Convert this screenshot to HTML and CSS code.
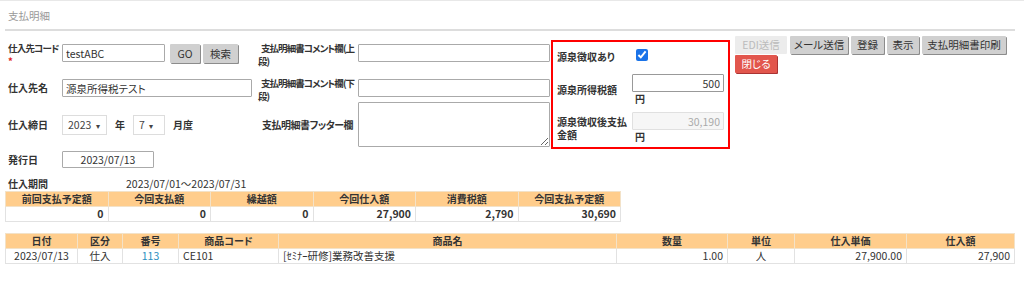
FILE: index.html
```html
<!DOCTYPE html>
<html lang="ja">
<head>
  <meta charset="UTF-8">
  <title>支払明細</title>
  <link rel="stylesheet" href="styles.css">
</head>
<body>
  <div class="page">
    <div class="title">支払明細</div>

    <div class="form">
      <div class="col-left">
        <div class="row row-code">
          <div class="label">仕入先コード<br><span class="req">*</span></div>
          <input class="input code" type="text" value="testABC">
          <button class="btn go">GO</button>
          <button class="btn search">検索</button>
        </div>
        <div class="row row-name">
          <div class="label">仕入先名</div>
          <input class="input name" type="text" value="源泉所得税テスト">
        </div>
        <div class="row row-close">
          <div class="label">仕入締日</div>
          <div class="select year">2023 <span class="caret">▾</span></div>
          <span class="unit">年</span>
          <div class="select month">7 <span class="caret">▾</span></div>
          <span class="unit">月度</span>
        </div>
        <div class="row row-issue">
          <div class="label">発行日</div>
          <input class="input issue" type="text" value="2023/07/13">
        </div>
      </div>

      <div class="col-mid">
        <div class="row row-c1">
          <div class="label mid-label">支払明細書コメント欄(上<br>段)</div>
          <input class="input comment" type="text">
        </div>
        <div class="row row-c2">
          <div class="label mid-label">支払明細書コメント欄(下<br>段)</div>
          <input class="input comment" type="text">
        </div>
        <div class="row row-footer">
          <div class="label mid-label">支払明細書フッター欄</div>
          <textarea class="footer-area"></textarea>
        </div>
      </div>

      <div class="tax-box">
        <div class="tax-row tax-check">
          <div class="label tax-label">源泉徴収あり</div>
          <div class="tax-value"><input class="check" type="checkbox" checked></div>
        </div>
        <div class="tax-row">
          <div class="label tax-label">源泉所得税額</div>
          <div class="tax-value">
            <input class="input money" type="text" value="500">
            <div class="yen">円</div>
          </div>
        </div>
        <div class="tax-row">
          <div class="label tax-label">源泉徴収後支払金額</div>
          <div class="tax-value">
            <input class="input money" type="text" value="30,190" disabled>
            <div class="yen">円</div>
          </div>
        </div>
      </div>

      <div class="actions">
        <button class="btn btn-edi disabled">EDI送信</button>
        <button class="btn btn-mail">メール送信</button>
        <button class="btn btn-save">登録</button>
        <button class="btn btn-show">表示</button>
        <button class="btn btn-print">支払明細書印刷</button>
        <button class="btn btn-close">閉じる</button>
      </div>
    </div>

    <div class="period">
      <div class="label period-label">仕入期間</div>
      <div>2023/07/01～2023/07/31</div>
    </div>

    <table class="summary">
      <tr>
        <th>前回支払予定額</th>
        <th>今回支払額</th>
        <th>繰越額</th>
        <th>今回仕入額</th>
        <th>消費税額</th>
        <th>今回支払予定額</th>
      </tr>
      <tr>
        <td>0</td>
        <td>0</td>
        <td>0</td>
        <td>27,900</td>
        <td>2,790</td>
        <td>30,690</td>
      </tr>
    </table>

    <table class="detail">
      <colgroup>
        <col class="w-date">
        <col class="w-kind">
        <col class="w-no">
        <col class="w-code">
        <col class="w-name">
        <col class="w-qty">
        <col class="w-unit">
        <col class="w-price">
        <col class="w-amount">
      </colgroup>
      <tr>
        <th>日付</th>
        <th>区分</th>
        <th>番号</th>
        <th>商品コード</th>
        <th>商品名</th>
        <th>数量</th>
        <th>単位</th>
        <th>仕入単価</th>
        <th>仕入額</th>
      </tr>
      <tr>
        <td class="center">2023/07/13</td>
        <td class="center">仕入</td>
        <td class="center"><a href="#" class="link">113</a></td>
        <td>CE101</td>
        <td>[ｾﾐﾅｰ研修]業務改善支援</td>
        <td class="num">1.00</td>
        <td class="center">人</td>
        <td class="num">27,900.00</td>
        <td class="num">27,900</td>
      </tr>
    </table>
  </div>
</body>
</html>
```

FILE: styles.css
```css
body {
  margin: 0;
  font-family: "Noto Sans CJK JP", "Noto Sans", sans-serif;
  font-size: 10.5px;
  font-feature-settings: "palt";
  color: #333;
  background: #fff;
}

.page {
  border-top: 1px solid #e8e8e8;
  padding: 0 9px 0 5px;
}

.title {
  height: 28px;
  line-height: 30px;
  padding-left: 3px;
  color: #999;
  border-bottom: 2px solid #ddd;
}

.label {
  font-weight: bold;
  font-size: 10px;
  color: #333;
  line-height: 13px;
}

.input {
  box-sizing: border-box;
  height: 18px;
  border: 1px solid #aaa;
  border-radius: 1px;
  padding: 0 3px;
  font-family: inherit;
  font-size: 10.5px;
  font-feature-settings: "palt";
  color: #333;
  background: #fff;
}

.form {
  display: flex;
  align-items: flex-start;
  padding-top: 5px;
}

/* left column */
.col-left {
  width: 244px;
  margin-left: 3px;
  padding-top: 8px;
}

.row {
  display: flex;
  align-items: flex-start;
}

.col-left .label {
  width: 54px;
  flex: none;
  white-space: nowrap;
}

.row-code {
  height: 35px;
}

.row-code .label {
  margin-top: -2px;
  font-size: 9.5px;
  letter-spacing: -0.8px;
}

.req {
  color: #e02020;
}

.code {
  width: 103px;
}

.btn {
  box-sizing: border-box;
  height: 18px;
  padding: 0;
  border: none;
  border-radius: 1px;
  background: #d0d0d0;
  box-shadow: 1px 1px 0 #8c8c8c;
  font-family: inherit;
  font-size: 10.5px;
  font-feature-settings: "palt";
  color: #333;
  line-height: 18px;
  white-space: nowrap;
}

.go {
  margin-left: 5px;
  width: 30px;
  height: 19px;
}

.search {
  margin-left: 3px;
  width: 35px;
  height: 19px;
}

.row-name {
  height: 36px;
}

.row-name .label,
.row-issue .label {
  line-height: 18px;
}

.name {
  width: 190px;
}

.row-close {
  height: 36px;
}

.row-close .label,
.unit {
  line-height: 20px;
  font-weight: bold;
}

.unit {
  font-size: 10px;
  margin: 0 8px;
}

.select {
  box-sizing: border-box;
  height: 20px;
  line-height: 18px;
  border: 1px solid #ddd;
  padding: 0 5px;
  color: #444;
}

.year {
  width: 45px;
}

.month {
  width: 32px;
}

.caret {
  font-size: 8px;
  margin-left: 2px;
}

.row-issue {
  height: 17px;
}

.issue {
  width: 92px;
  height: 17px;
  text-align: center;
}

/* middle column */
.col-mid {
  margin-left: 6px;
  padding-top: 8px;
}

.mid-label {
  width: 100px;
  flex: none;
  white-space: nowrap;
}

.row-c1 {
  height: 35px;
}

.row-c1 .label,
.row-c2 .label {
  margin-top: -2px;
  font-size: 9.5px;
  letter-spacing: -0.95px;
  text-indent: 3px;
}

.row-c2 {
  height: 23px;
}

.comment {
  width: 192px;
}

.row-footer {
  align-items: center;
}

.row-footer .label {
  padding-left: 4px;
  width: 96px;
  letter-spacing: -0.5px;
}

.footer-area {
  box-sizing: border-box;
  width: 192px;
  height: 45px;
  border: 1px solid #aaa;
  border-radius: 1px;
  margin: 0;
  resize: both;
}

/* withholding tax box */
.tax-box {
  box-sizing: border-box;
  width: 179px;
  height: 109px;
  margin: 4px 0 0 1px;
  border: 2px solid #f00;
  padding: 2px 4px 0 4px;
  display: flex;
  flex-direction: column;
  gap: 6px;
}

.tax-row {
  display: flex;
  align-items: center;
}

.tax-check {
  height: 24px;
}

.tax-label {
  width: 75px;
  flex: none;
}

.check {
  margin: 0 0 0 4px;
  width: 12px;
  height: 12px;
  accent-color: #1a73e8;
}

.money {
  width: 92px;
  text-align: right;
  border-color: #999;
}

.money:disabled {
  background: #f6f6f6;
  border-color: #e0e0e0;
  color: #aaa;
}

.yen {
  font-weight: bold;
  font-size: 10px;
  line-height: 13px;
  padding-left: 3px;
}

.tax-row + .tax-row + .tax-row {
  margin-top: 1px;
}

/* buttons */
.actions {
  width: 285px;
  margin-left: 5px;
  display: flex;
  flex-wrap: wrap;
  gap: 1px 3px;
}

.btn-edi { width: 52px; }
.btn-mail { width: 58px; }
.btn-save { width: 33px; }
.btn-show { width: 32px; }
.btn-print { width: 84px; }
.btn-close { width: 42px; }

.btn.disabled {
  background: #ececec;
  color: #bbb;
  box-shadow: none;
}

.btn.btn-close {
  background: #e2564d;
  color: #fff;
  box-shadow: 1px 1px 0 #a33;
}

/* period */
.period {
  display: flex;
  margin-top: 8px;
  line-height: 15px;
}

.period-label {
  width: 118px;
  padding-left: 3px;
  line-height: 15px;
}

/* tables */
table {
  border-collapse: collapse;
}

th,
td {
  border: 1px solid #e2e2e2;
  height: 14px;
  padding: 0 4px;
  line-height: 14px;
  font-size: 10.5px;
}

th {
  background: #ffcd8c;
  font-weight: bold;
  font-size: 10px;
  text-align: center;
  border-color: #f3e2c8;
}

.summary {
  width: 616px;
  table-layout: fixed;
}

.summary td {
  text-align: right;
  font-weight: bold;
}

.detail {
  width: 1010px;
  margin-top: 11px;
  table-layout: fixed;
}

.w-date { width: 72px; }
.w-kind { width: 45px; }
.w-no { width: 56px; }
.w-code { width: 100px; }
.w-name { width: 338px; }
.w-qty { width: 111px; }
.w-unit { width: 67px; }
.w-price { width: 112px; }
.w-amount { width: 108px; }

.center {
  text-align: center;
}

.num {
  text-align: right;
}

.link {
  color: #2b8fc0;
  text-decoration: none;
}
```
